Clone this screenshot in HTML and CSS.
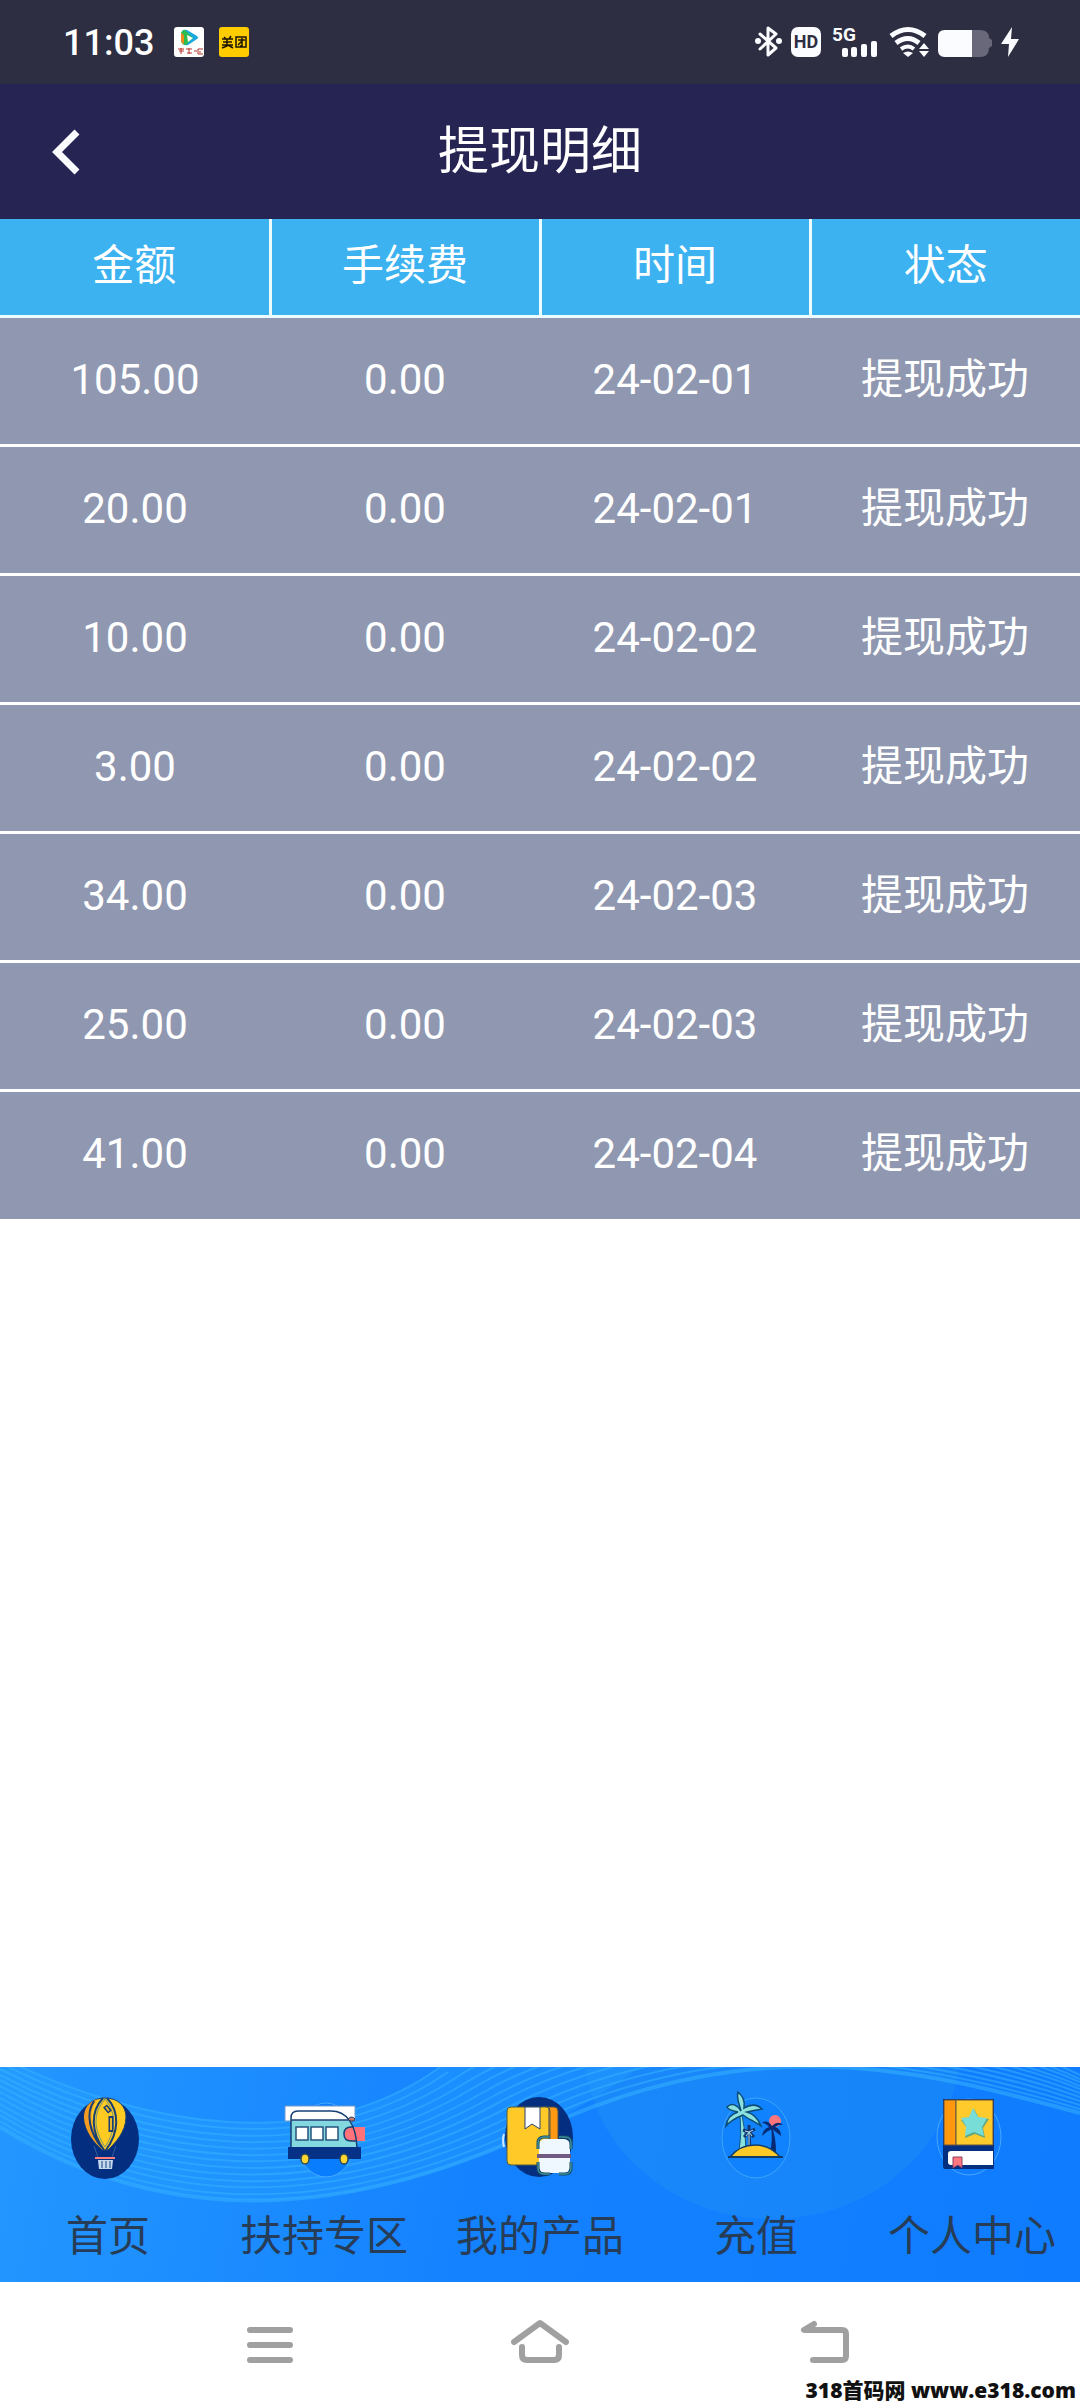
FILE: index.html
```html
<!DOCTYPE html>
<html lang="zh-CN">

<head>
    <meta charset="UTF-8">
    <meta name="viewport" content="width=device-width, initial-scale=1.0">
    <title>提现明细</title>
    <link rel="stylesheet" href="styles.css">
</head>

<body>
    <div class="status-bar">
        <span class="time">11:03</span>
        <svg class="app-icon" viewBox="0 0 30 30">
            <rect width="30" height="30" rx="3" fill="#fff"/>
            <path d="M8 4q2-2 5-1l10 6q2 2 0 3l-9 6q-4 1-6-2z" fill="#19a8e0"/>
            <path d="M7 6q1-3 4-3l8 8-7 7q-4 0-5-4z" fill="#2dbd4e"/>
            <path d="M7 6l3 2v9q-3-1-3-4z" fill="#f08a1c"/>
            <path d="M13 8l6 3-5 4z" fill="#fff"/>
            <path d="M4 22h6M7 21v6M5 24h5M12 22h6M15 21v6M13 26h5M20 24h3M24 22h5M24 22v5h5M26 24v2" fill="none" stroke="#b8352c"/>
        </svg>
        <svg class="app-icon" viewBox="0 0 30 30">
            <rect width="30" height="30" rx="3" fill="#fc0"/>
            <path d="M5 10l2 2M12 9l-2 3M3 12h11M4 15h9M3 18h11M8 12v7l-5 2M9 18l5 3M17 10h10v10H17zM19 13h7M23 11v8h-2M23 14l-4 4" fill="none" stroke="#1c1500" stroke-width="1.5"/>
        </svg>
        <div class="signals">
            <!-- bluetooth, HD, 5G, wifi, battery, charging -->
            <svg width="264" height="44" viewBox="756 20 264 44" fill="#fafcff">
                <path d="M761 34l16 14-8 7V28l8 6-16 15" fill="none" stroke="#fafcff" stroke-width="3" stroke-linejoin="round" stroke-linecap="round"/>
                <circle cx="759" cy="41" r="3"/>
                <circle cx="780" cy="41" r="3"/>
                <rect x="792" y="27" width="30" height="30" rx="7"/>
                <text x="807" y="48" class="hd">HD</text>
                <text x="833" y="41" class="net">5G</text>
                <rect x="843" y="48" width="6" height="9" rx="2"/>
                <rect x="852" y="47" width="6" height="10" rx="2"/>
                <rect x="862" y="44" width="6" height="13" rx="2"/>
                <rect x="872" y="41" width="6" height="16" rx="2"/>
                <g fill="none" stroke="#fafcff" stroke-width="5">
                    <path d="M892 36q17-13 34 0"/>
                    <path d="M897 43q12-9 23 0"/>
                    <path d="M902 49q7-5 13 0" stroke-width="4"/>
                </g>
                <path d="M904 53q5-3 10 0l-5 4z"/>
                <path d="M920 49l5-6 5 6zM920 51h10l-5 6z"/>
                <path d="M946 30h35q9 0 9 8l3 2v6l-3 2q0 9-9 9h-35q-7 0-7-7V37q0-7 7-7z" fill="#68687a"/>
                <path d="M946 30h27v27h-27q-7 0-7-7V37q0-7 7-7z"/>
                <path d="M1013 27l-11 17h8l-1 13 11-18h-8z"/>
            </svg>
        </div>
    </div>

    <header class="title-bar">
        <button class="back" type="button" aria-label="返回">
            <svg width="28" height="46" viewBox="0 0 28 46" fill="none" stroke="#fafcff" stroke-width="7">
                <path d="M25 3L5 23l20 20"/>
            </svg>
        </button>
        <h1>提现明细</h1>
    </header>

    <main>
        <table class="records">
            <thead>
                <tr><th>金额</th><th>手续费</th><th>时间</th><th>状态</th></tr>
            </thead>
            <tbody>
                <tr><td>105.00</td><td>0.00</td><td>24-02-01</td><td>提现成功</td></tr>
                <tr><td>20.00</td><td>0.00</td><td>24-02-01</td><td>提现成功</td></tr>
                <tr><td>10.00</td><td>0.00</td><td>24-02-02</td><td>提现成功</td></tr>
                <tr><td>3.00</td><td>0.00</td><td>24-02-02</td><td>提现成功</td></tr>
                <tr><td>34.00</td><td>0.00</td><td>24-02-03</td><td>提现成功</td></tr>
                <tr><td>25.00</td><td>0.00</td><td>24-02-03</td><td>提现成功</td></tr>
                <tr><td>41.00</td><td>0.00</td><td>24-02-04</td><td>提现成功</td></tr>
            </tbody>
        </table>
    </main>

    <nav class="tab-bar">
        <svg class="waves" viewBox="0 0 1080 215" preserveAspectRatio="none">
            <ellipse cx="772" cy="-20" rx="188" ry="172" fill="#30a0ea" opacity=".24"/>
            <path d="M0 -10C145 62 320 88 440 0L640 0Q600 30 540 62C330 165 150 150 0 60z" fill="#26a4ff" opacity=".35"/>
            <g fill="none" stroke="#35b2ff" stroke-width="2" opacity=".55">
                <path d="M0 -10C145 62 320 88 440 0"/>
                <path d="M0 -4C145 69 320 94 448 5"/>
                <path d="M0 2C145 77 320 101 457 10S930 -65 1080 8"/>
                <path d="M0 8C145 84 320 107 465 16S930 -58 1080 12"/>
                <path d="M0 13C145 91 320 114 473 21S930 -51 1080 15"/>
                <path d="M0 19C145 99 320 120 482 26S930 -44 1080 19"/>
                <path d="M0 25C145 106 320 126 490 31S930 -37 1080 22"/>
                <path d="M0 31C145 113 320 133 498 36S930 -30 1080 26"/>
                <path d="M0 37C145 121 320 139 507 41S930 -23 1080 30"/>
                <path d="M0 43C145 128 320 146 515 47S930 -16 1080 34"/>
                <path d="M0 48C145 135 320 152 523 52S930 -9 1080 38"/>
                <path d="M0 54C145 143 320 159 532 57S930 -2 1080 42"/>
                <path d="M0 60C145 150 320 165 540 62S930 5 1080 46" stroke-width="4"/>
            </g>
        </svg>
        <a href="#">
            <svg class="tab-icon" viewBox="0 0 84 92">
                <ellipse cx="39" cy="49" rx="34" ry="40" fill="#042f80"/>
                <path d="M39 8C25 8 18 17 18 27C18 42 29 53 36 60h6C49 53 60 42 60 27C60 17 53 8 39 8z" fill="#ffca22" stroke="#143c74"/>
                <path d="M32 9C22 12 18 19 18 28C19 41 28 52 35 58C25 39 21 21 32 9z" fill="#f39a20"/>
                <path d="M37 8C24 22 25 42 38 60M41 8C54 22 53 42 40 60M28 11C19 24 24 43 36 58" fill="none" stroke="#173f73" stroke-width="2"/>
                <path d="M39 9C26 24 28 40 39 57M39 9C51 24 50 40 39 57" fill="none" stroke="#6d947b" stroke-width="1"/>
                <path d="M39 16l5 6M45 26v16" fill="none" stroke="#173f73" stroke-width="5"/>
                <path d="M40 17l3 4M45 28v12" fill="none" stroke="#e8b72d" stroke-width="2"/>
                <path d="M28 56l4 11M50 56l-4 11" stroke="#365e9b" fill="none"/>
                <path d="M29 68h20" stroke="#ff817e" stroke-width="2"/>
                <path d="M32 70h15l-1 9H33z" fill="#c5d9ed"/>
                <path d="M36 71v7M40 71v7M44 71v7" stroke="#164284" stroke-width="1" fill="none"/>
            </svg>
            <span>首页</span>
        </a>
        <a href="#">
            <svg class="tab-icon" viewBox="0 0 84 92">
                <ellipse cx="44" cy="50" rx="29" ry="37" fill="#087eff" stroke="#46a8ff"/>
                <path d="M3 16h70v15H3z" fill="#fff" stroke="#6f98ce"/>
                <path d="M9 31h60q6 12 6 28H9z" fill="#83d7df"/>
                <path d="M83 37H69q-7 0-7 7t7 7h14z" fill="#ff7279"/>
                <path d="M72 37h-3q-7 0-7 7t7 7h6M9 57V28q0-7 7-7h33c15 0 25 12 26 37M9 30h61" fill="none" stroke="#164176" stroke-width="1.5"/>
                <path d="M14 37h12v13H14zM29 37h12v13H29zM44 37h12v13H44z" fill="#fff" stroke="#26547d" stroke-width="1.5"/>
                <path d="M66 29q4-4 7 0l-1 2h-4z" fill="#cc7665" stroke="#164176"/>
                <path d="M6 57h73v12H6z" fill="#053287"/>
                <ellipse cx="23" cy="69" rx="4" ry="5" fill="#ffd52f" stroke="#314d54" stroke-width="1.5"/>
                <ellipse cx="62" cy="69" rx="4" ry="5" fill="#ffd52f" stroke="#314d54" stroke-width="1.5"/>
            </svg>
            <span>扶持专区</span>
        </a>
        <a href="#">
            <svg class="tab-icon" viewBox="0 0 84 92">
                <path d="M6 44q-2 6 0 13" fill="none" stroke="#cce7ff" stroke-width="2"/>
                <ellipse cx="41" cy="47" rx="34" ry="40" fill="#042f80"/>
                <path d="M45 17h11q4 0 4 4v54H45z" fill="#ff9813" stroke="#49524c"/>
                <rect x="9" y="17" width="43" height="58" rx="4" fill="#ffc928" stroke="#505d44"/>
                <path d="M27 17h15v22l-8-5-7 5z" fill="#fff" stroke="#29416a"/>
                <path d="M51 18v35" stroke="#37415b"/>
                <rect x="41" y="49" width="31" height="34" rx="6" fill="#eff8ff"/>
                <path d="M40 59v-6q0-6 6-6h6M61 47h6q6 0 6 6v6M40 72v6q0 6 6 6h6M61 84h6q6 0 6-6v-6" fill="none" stroke="#154b63" stroke-width="3"/>
                <path d="M40 59v-6q0-6 6-6h6M61 47h6q6 0 6 6v6M40 72v6q0 6 6 6h6M61 84h6q6 0 6-6v-6" fill="none" stroke="#56aeb2" stroke-width="1"/>
                <path d="M39 66h34" stroke="#705a82" stroke-width="4"/>
            </svg>
            <span>我的产品</span>
        </a>
        <a href="#">
            <svg class="tab-icon" viewBox="0 0 84 92">
                <ellipse cx="42" cy="48" rx="34" ry="40" fill="#087eff" fill-opacity=".5" stroke="#3da5fb"/>
                <path d="M28 25q4 17 4 37h-7q3-19 1-36z" fill="#8be1dc" stroke="#125780"/>
                <path d="M27 21C25 13 22 7 24 2c6 5 7 11 6 16c7-4 13-4 18 1c-6 1-11 2-15 3c7 2 11 6 14 14c-7-5-13-7-18-11c-5 2-12 5-17 11c1-7 5-12 12-14c-5-1-10-2-11-5c5-5 10-2 14 4z" fill="#8be1dc" stroke="#0e4c78" stroke-width="1.5"/>
                <circle cx="61" cy="31" r="6" fill="#ff777b"/>
                <path d="M58 37q4 10 4 25h-6q3-12 1-25z" fill="#062b73"/>
                <path d="M58 36q-5-7-10-3 4 0 7 4-6 2-7 9 5-5 10-7 4 3 9 7 0-7-6-9 4-3 8-2-5-5-11 1z" fill="#062b73"/>
                <path d="M35 42l1 18M35 42l-6-2M35 42l6-3M35 42l-5 5M35 42l5 5M35 42v-7" stroke="#12366f" stroke-width="3" fill="none"/>
                <path d="M35 43v17M35 42l-4-1M35 42l4-2M35 42l-3 4M35 42l3 4" stroke="#b9e5ec" stroke-width="1" fill="none"/>
                <path d="M16 67C24 57 34 55 41 55s17 2 25 12z" fill="#ffca28" stroke="#123d68" stroke-width="1.5"/>
                <path d="M14 67h55" stroke="#123d68" stroke-width="2"/>
            </svg>
            <span>充值</span>
        </a>
        <a href="#">
            <svg class="tab-icon" viewBox="0 0 84 92">
                <ellipse cx="39" cy="47" rx="32" ry="38" fill="none" stroke="#46a8ff"/>
                <path d="M13 9h51v70H15q-2 0-2-3z" fill="#042f80"/>
                <path d="M14 10h12v45H14z" fill="#ff980c" stroke="#635445"/>
                <path d="M26 10h37v45H26z" fill="#ffca2b" stroke="#635445"/>
                <path d="M44 19l5 9 10 1-6 9 2 10-10-4-10 4 2-10-6-8 9-1z" fill="#62a982"/>
                <path d="M43 18l5 9 9 1-5 9 2 9-10-4-9 4 1-10-5-8 8-1z" fill="#78ddd7"/>
                <path d="M63 61H21q-3 0-3 3v8q0 3 3 3h42z" fill="#fff"/>
                <path d="M23 67h9v11l-4-3-5 3z" fill="#ff777e" stroke="#8d3e66"/>
            </svg>
            <span>个人中心</span>
        </a>
    </nav>

    <footer class="system-nav">
        <button type="button" aria-label="最近任务">
            <svg width="80" height="54" viewBox="0 0 80 54" stroke="#a0a0a0" stroke-width="6" stroke-linecap="round">
                <path d="M20 12h40M20 27h40M20 42h40"/>
            </svg>
        </button>
        <button type="button" aria-label="主屏幕">
            <svg width="80" height="54" viewBox="0 0 80 54" fill="none" stroke="#a0a0a0" stroke-width="6" stroke-linecap="round" stroke-linejoin="round">
                <path d="M14 24L40 5l26 19M22 29v8q0 5 5 5h27q5 0 5-5v-8"/>
            </svg>
        </button>
        <button type="button" aria-label="返回">
            <svg width="80" height="54" viewBox="0 0 80 54" fill="none" stroke="#a0a0a0" stroke-width="6" stroke-linecap="round" stroke-linejoin="round">
                <path d="M44 6l-10 6h38q4 0 4 4v22q0 4-4 4H43"/>
            </svg>
        </button>
        <p class="watermark">318首码网 www.e318.com</p>
    </footer>
</body>

</html>
```

FILE: styles.css
```css
* {
    box-sizing: border-box;
}

body {
    margin: 0;
    min-height: 100vh;
    display: flex;
    flex-direction: column;
    background-color: #fff;
    font-family: Roboto, "Noto Sans CJK SC", sans-serif;
    font-size: 42px;
    line-height: 50px;
}

svg {
    display: block;
}

button {
    padding: 0;
    border: none;
    background: none;
    cursor: pointer;
}

.status-bar {
    display: flex;
    align-items: center;
    gap: 15px;
    height: 84px;
    padding: 0 61px 0 63px;
    background-color: #2e2e42;
    color: #fff;
}

.time {
    margin-right: 5px;
    padding-top: 2px;
    font-size: 36px;
    font-weight: 500;
}

.app-icon {
    width: 30px;
    height: 30px;
}

.signals {
    margin-left: auto;
}

.hd {
    font-size: 18px;
    font-weight: 700;
    text-anchor: middle;
    fill: #2e2e42;
}

.net {
    font-size: 19px;
    font-weight: 700;
}

.title-bar {
    display: grid;
    grid-template-columns: 28px 1fr 28px;
    align-items: center;
    height: 135px;
    padding: 0 52px;
    background-color: #252452;
    color: #fff;
}

.title-bar h1 {
    margin: 0;
    font-size: 51px;
    font-weight: 400;
    text-align: center;
}

main {
    flex: 1;
}

.records {
    width: 100%;
    table-layout: fixed;
    border-collapse: collapse;
    color: #fff;
    text-align: center;
}

.records th {
    height: 97px;
    padding: 0 0 2px;
    border-bottom: 3px solid #ecfcff;
    background-color: #3cb2f0;
    font-weight: 400;
}

.records th + th {
    border-left: 3px solid #ecfcff;
}

.records td {
    height: 129px;
    padding: 0 0 2px;
    background-color: #8f98b0;
}

.records tr + tr td {
    border-top: 3px solid #fff;
}

.tab-bar {
    position: relative;
    display: grid;
    grid-template-columns: repeat(5, 1fr);
    height: 215px;
    overflow: hidden;
    background: linear-gradient(100deg, #2497ff, #1482ff 45%, #0f7cff);
}

.waves {
    position: absolute;
    top: 0;
    left: 0;
    width: 100%;
    height: 100%;
}

.tab-bar a {
    position: relative;
    display: flex;
    flex-direction: column;
    align-items: center;
    gap: 30px;
    padding-top: 23px;
    color: #263c57;
    text-decoration: none;
    white-space: nowrap;
}

.tab-icon {
    width: 84px;
    height: 92px;
}

.system-nav {
    position: relative;
    display: grid;
    grid-template-columns: repeat(3, 1fr);
    place-items: center;
    height: 126px;
    padding: 0 12.5%;
    background-color: #fff;
}

.watermark {
    position: absolute;
    right: 4px;
    bottom: 4px;
    margin: 0;
    color: #111;
    font-family: "Open Sans", "Noto Sans CJK SC", sans-serif;
    font-size: 21px;
    font-weight: 800;
    line-height: 28px;
}
```
